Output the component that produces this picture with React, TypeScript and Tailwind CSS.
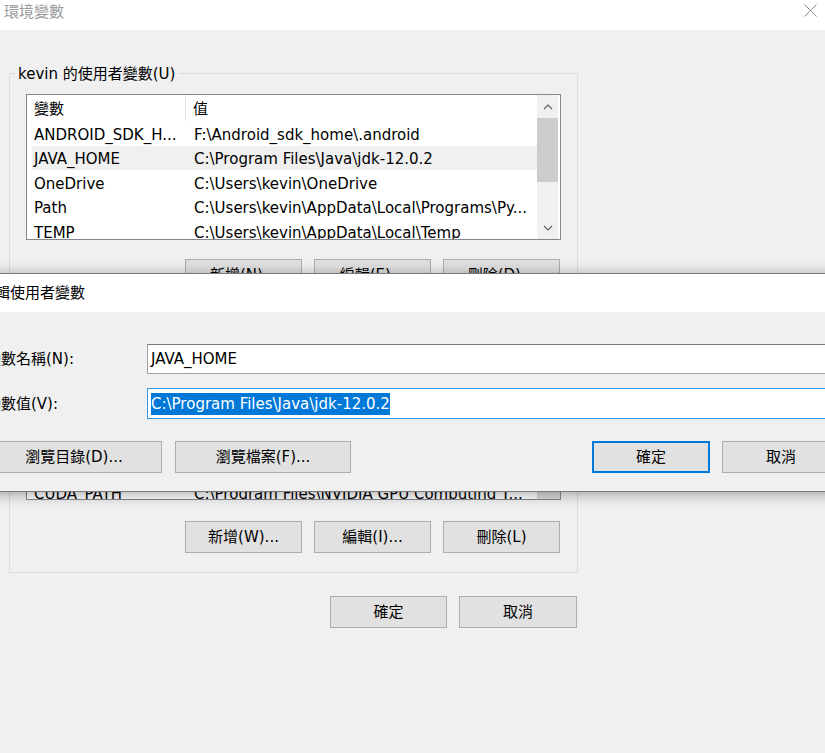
import React from 'react'

const FONT = "[font-family:'DejaVu_Sans','Noto_Sans_CJK_TC',sans-serif]"

const USER_VARS = [
  ['ANDROID_SDK_H...', 'F:\\Android_sdk_home\\.android'],
  ['JAVA_HOME', 'C:\\Program Files\\Java\\jdk-12.0.2'],
  ['OneDrive', 'C:\\Users\\kevin\\OneDrive'],
  ['Path', 'C:\\Users\\kevin\\AppData\\Local\\Programs\\Py...'],
  ['TEMP', 'C:\\Users\\kevin\\AppData\\Local\\Temp'],
]

const SYSTEM_VARS = [
  ['ComSpec', 'C:\\WINDOWS\\system32\\cmd.exe'],
  ['CUDA_PATH', 'C:\\Program Files\\NVIDIA GPU Computing T...'],
]

function Button({ label, className = '' }: { label: string; className?: string }) {
  return (
    <button
      className={`h-[32px] w-[117px] shrink-0 flex items-center justify-center border border-[#adadad] bg-[#e1e1e1] text-[15px] leading-[20px] text-black ${className}`}
    >
      {label}
    </button>
  )
}

function Chevron({ up }: { up?: boolean }) {
  return (
    <svg width="10" height="6" viewBox="0 0 10 6" fill="none" stroke="#606060" strokeWidth="1.2">
      <path d={up ? 'M1 5L5 1L9 5' : 'M1 1L5 5L9 1'} />
    </svg>
  )
}

function VarRow({ name, value, selected }: { name: string; value: string; selected?: boolean }) {
  return (
    <div
      className={`ml-[5px] h-[24.5px] shrink-0 pt-[3px] flex items-center whitespace-nowrap text-[15px] leading-[20px] text-black ${
        selected ? 'bg-[#f0f0f0]' : ''
      }`}
    >
      <span className="w-[160px] shrink-0 pl-[2px] overflow-hidden">{name}</span>
      <span className="pl-[2px] overflow-hidden">{value}</span>
    </div>
  )
}

function ListHeader() {
  return (
    <div className="ml-[5px] h-[26px] shrink-0 flex items-center text-[15px] leading-[20px] text-black">
      <span className="w-[154px] h-full flex items-center pt-[2px] pl-[2px] border-r border-[#e5e5e5]">變數</span>
      <span className="pt-[2px] pl-[7px]">值</span>
    </div>
  )
}

export default function App() {
  return (
    <div className={`relative w-[825px] h-[753px] overflow-hidden bg-[#f0f0f0] ${FONT}`}>
      {/* background dialog title bar */}
      <div className="h-[30px] bg-white flex items-start justify-between pl-[4px] pr-[8px]">
        <span className="mt-[2px] text-[15px] leading-[20px] text-[#9a9a9a]">環境變數</span>
        <svg className="mt-[4px]" width="13" height="13" viewBox="0 0 13 13" stroke="#8a8a8a" strokeWidth="1">
          <path d="M0.5 0.5L12.5 12.5M12.5 0.5L0.5 12.5" />
        </svg>
      </div>

      <div className="pt-[32px] pl-[9px]">
        {/* user variables */}
        <fieldset className="w-[569px] border border-[#dcdcdc] pb-[12px]">
          <legend className="ml-[5px] px-[3px] pt-[2px] text-[15px] leading-[20px] text-black">kevin 的使用者變數(U)</legend>
          <div className="mt-[10px] ml-[16px] w-[535px] h-[146px] border border-[#828790] bg-white flex">
            <div className="flex-1 flex flex-col overflow-hidden">
              <ListHeader />
              {USER_VARS.map(([n, v], i) => (
                <VarRow key={n} name={n} value={v} selected={i === 1} />
              ))}
            </div>
            <div className="w-[23px] pr-[2px] flex flex-col bg-white">
              <div className="h-[23px] flex items-center justify-center bg-[#f0f0f0]">
                <Chevron up />
              </div>
              <div className="h-[64px] bg-[#cdcdcd]" />
              <div className="flex-1 bg-[#f0f0f0]" />
              <div className="h-[23px] flex items-center justify-center bg-[#f0f0f0]">
                <Chevron />
              </div>
            </div>
          </div>
          <div className="mt-[19px] mr-[17px] flex justify-end gap-[12px]">
            <Button label="新增(N)..." />
            <Button label="編輯(E)..." />
            <Button label="刪除(D)..." />
          </div>
        </fieldset>

        {/* system variables */}
        <fieldset className="mt-[8px] w-[569px] border border-[#dcdcdc] pb-[19px]">
          <legend className="ml-[5px] px-[3px] text-[15px] leading-[20px] text-black">系統變數(S)</legend>
          <div className="mt-[12px] ml-[16px] w-[535px] h-[156px] border border-[#828790] bg-white flex">
            <div className="flex-1 flex flex-col overflow-hidden">
              <ListHeader />
              <div className="flex-1 flex flex-col justify-end overflow-hidden">
                <div className="-mb-[6px] flex flex-col">
                  {SYSTEM_VARS.map(([n, v]) => (
                    <VarRow key={n} name={n} value={v} />
                  ))}
                </div>
              </div>
            </div>
            <div className="w-[23px] flex flex-col bg-[#f0f0f0]">
              <div className="h-[23px] flex items-center justify-center">
                <Chevron up />
              </div>
              <div className="flex-1" />
              <div className="h-[26px] bg-[#dadada]" />
            </div>
          </div>
          <div className="mt-[21px] mr-[17px] flex justify-end gap-[12px]">
            <Button label="新增(W)..." />
            <Button label="編輯(I)..." />
            <Button label="刪除(L)" />
          </div>
        </fieldset>

        <div className="mt-[23px] w-[569px] pr-[1px] flex justify-end gap-[12px]">
          <Button label="確定" />
          <Button label="取消" className="w-[118px]" />
        </div>
      </div>

      {/* edit user variable dialog, over the main dialog */}
      <div className="absolute left-[-28px] top-[273px] w-[880px] border border-[#7a7a7a] bg-[#f0f0f0] shadow-[0_2px_14px_rgba(0,0,0,0.35)]">
        <div className="h-[38px] bg-white flex items-center pl-[7px] text-[15px] leading-[20px] text-black">
          編輯使用者變數
        </div>
        <div className="pt-[32px] pb-[18px] pl-[13px] pr-[11px]">
          <div className="flex items-center">
            <span className="w-[161px] shrink-0 text-[15px] leading-[20px] text-black">變數名稱(N):</span>
            <div className="flex-1 h-[30px] flex items-center bg-white border border-[#a0a0a0] border-t-[#7a7a7a] pl-[3px] text-[15px] leading-[20px] text-black">
              JAVA_HOME
            </div>
          </div>
          <div className="mt-[14px] flex items-center">
            <span className="w-[161px] shrink-0 text-[15px] leading-[20px] text-black">變數值(V):</span>
            <div className="flex-1 h-[31px] flex items-center bg-white border border-[#3399e6] pl-[3px] text-[15px]">
              <span className="inline-block leading-[22px] bg-[#0078d7] text-white whitespace-nowrap">
                C:\Program Files\Java\jdk-12.0.2
              </span>
            </div>
          </div>
          <div className="mt-[22px] flex items-center">
            <Button label="瀏覽目錄(D)..." className="w-[176px]" />
            <Button label="瀏覽檔案(F)..." className="ml-[13px] w-[176px]" />
            <div className="flex-1" />
            <button className="h-[32px] w-[118px] flex items-center justify-center border-2 border-[#0078d7] bg-[#e1e1e1] text-[15px] leading-[20px] text-black">
              確定
            </button>
            <Button label="取消" className="ml-[12px] w-[118px]" />
          </div>
        </div>
      </div>
    </div>
  )
}
